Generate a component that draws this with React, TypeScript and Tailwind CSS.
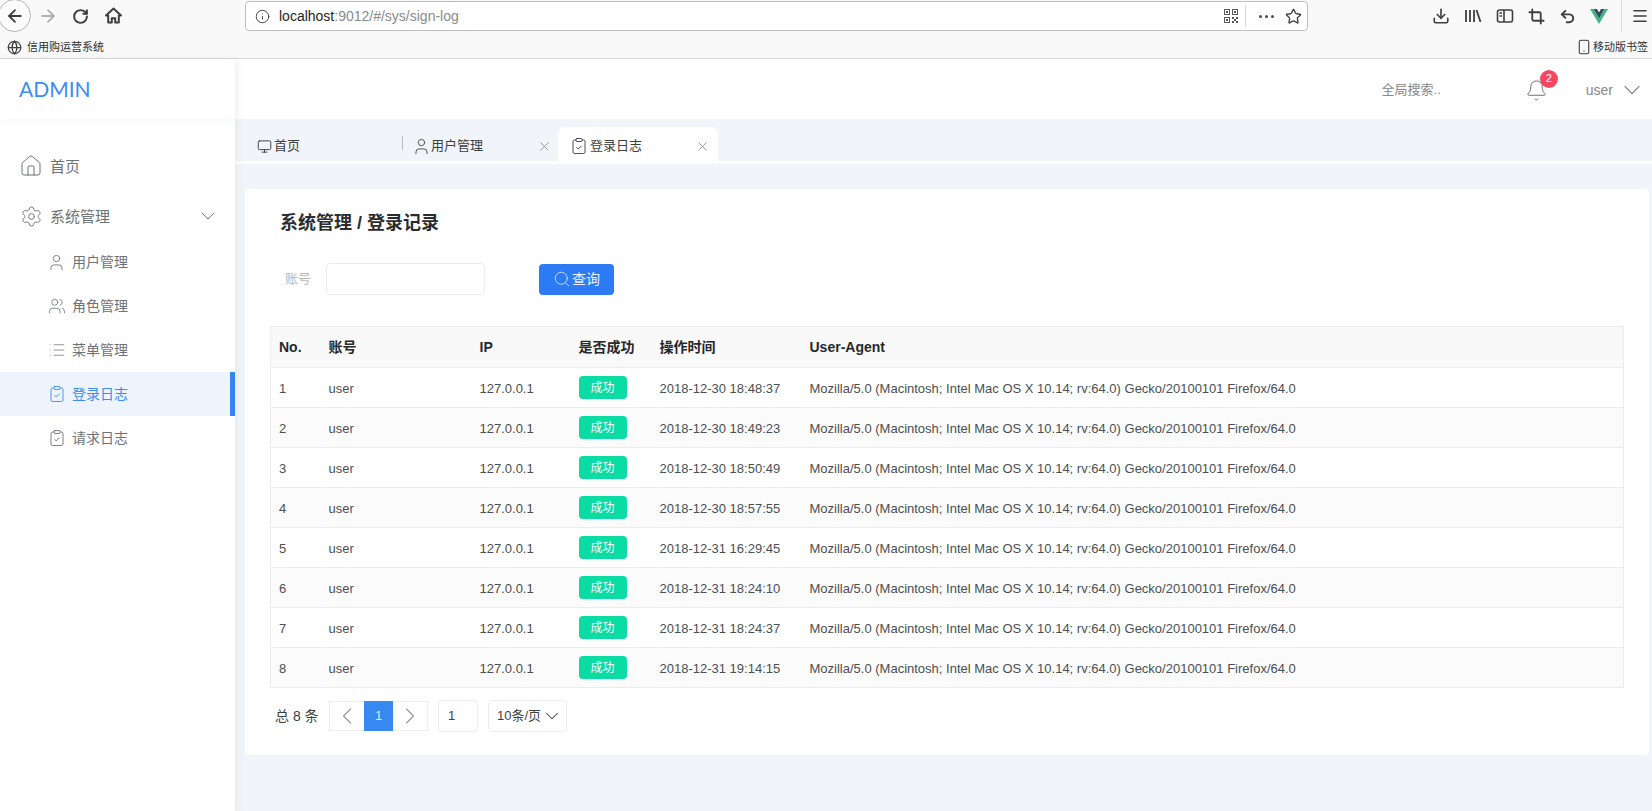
import React from "react";
import {
  House, Settings, ChevronDown, User, Users, List, ClipboardCheck, Monitor, Search, Bell, X,
  ChevronLeft, ChevronRight, ArrowLeft, ArrowRight, RotateCw, Info, Star, Download, Crop, Undo2, Menu, Globe, Smartphone,
} from "lucide-react";

const FONT = '"Liberation Sans","Noto Sans CJK SC",sans-serif';

const rows = [
  ["1", "2018-12-30 18:48:37"],
  ["2", "2018-12-30 18:49:23"],
  ["3", "2018-12-30 18:50:49"],
  ["4", "2018-12-30 18:57:55"],
  ["5", "2018-12-31 16:29:45"],
  ["6", "2018-12-31 18:24:10"],
  ["7", "2018-12-31 18:24:37"],
  ["8", "2018-12-31 19:14:15"],
];
const UA = "Mozilla/5.0 (Macintosh; Intel Mac OS X 10.14; rv:64.0) Gecko/20100101 Firefox/64.0";

function QrIcon() {
  return (
    <svg width="14" height="14" viewBox="0 0 14 14" fill="#5a5a5e">
      <path fillRule="evenodd" d="M0 0h6v6H0zM1 1v4h4V1zM8 0h6v6H8zM9 1v4h4V1zM0 8h6v6H0zM1 9v4h4V9z" />
      <rect x="2" y="2" width="2" height="2" />
      <rect x="10" y="2" width="2" height="2" />
      <rect x="2" y="10" width="2" height="2" />
      <rect x="8" y="8" width="2" height="2" />
      <rect x="12" y="8" width="2" height="2" />
      <rect x="10" y="10" width="2" height="2" />
      <rect x="8" y="12" width="2" height="2" />
      <rect x="12" y="12" width="2" height="2" />
    </svg>
  );
}

function BrowserChrome() {
  return (
    <div className="h-[59px] shrink-0 bg-[#f9f9f9] border-b border-[#d8d8d8] flex flex-col">
      <div className="h-[36px] flex items-start text-[#3f3f42]">
        <div className="w-[33px] h-[33px] -ml-[2px] -mt-[1px] rounded-full border border-[#b5b5b5] bg-[#fbfbfb] flex items-center justify-center shrink-0">
          <ArrowLeft size={20} strokeWidth={2.2} />
        </div>
        <ArrowRight size={20} strokeWidth={2.2} className="ml-[7px] mt-[6px] text-[#b1b1b3] shrink-0" />
        <RotateCw size={17} strokeWidth={2.8} className="ml-[14px] mt-[8px] shrink-0" />
        <svg width="17" height="17" viewBox="0 0 17 17" className="ml-[16px] mt-[7px] shrink-0">
          <path d="M8.5 1.5 1 8.5h2.2V15.5h3.6v-4.3h3.4v4.3h3.6V8.5H16z" fill="none" stroke="#3f3f42" strokeWidth="2" strokeLinejoin="round" />
        </svg>
        <div className="ml-[123px] mt-[1px] w-[1063px] h-[30px] rounded-[4px] bg-white border border-[#bdbdbd] flex items-center pl-[9px] pr-[5px] shrink-0">
          <Info size={15} strokeWidth={1.6} className="text-[#47474a] shrink-0" />
          <span className="ml-[9px] text-[14px] text-[#1f1f21]">localhost<span className="text-[#8a8a8c]">:9012/#/sys/sign-log</span></span>
          <div className="flex-1" />
          <QrIcon />
          <div className="w-px h-[22px] bg-[#d4d4d4] ml-[7px]" />
          <div className="flex gap-[2px] ml-[13px]">
            <span className="w-[3px] h-[3px] rounded-full bg-[#4c4c4f]" />
            <span className="mx-[1px] w-[3px] h-[3px] rounded-full bg-[#4c4c4f]" />
            <span className="w-[3px] h-[3px] rounded-full bg-[#4c4c4f]" />
          </div>
          <Star size={17} strokeWidth={2} className="ml-[11px] text-[#47474a]" />
        </div>
        <div className="flex-1" />
        <div className="flex items-center h-[32px] gap-[14px] pr-[3px]">
          <Download size={18} strokeWidth={2.2} />
          <svg width="18" height="18" viewBox="0 0 18 18" fill="none" stroke="#3f3f42" strokeWidth="1.8">
            <path d="M2 3v12M6 3v12M10 3v12M12.5 3l4 12" />
          </svg>
          <svg width="18" height="18" viewBox="0 0 18 18" fill="none" stroke="#3f3f42" strokeWidth="1.6">
            <rect x="1.5" y="3" width="15" height="12" rx="2" />
            <path d="M8 3v12M3.5 6h2.5M3.5 9h2.5" />
          </svg>
          <Crop size={17} strokeWidth={2.6} />
          <Undo2 size={17} strokeWidth={2.8} />
          <svg width="18" height="16" viewBox="0 0 18 16">
            <path d="M0 1h3.6L9 10.5 14.4 1H18L9 16z" fill="#41b883" />
            <path d="M3.6 1H7l2 3.5L11 1h3.4L9 10.5z" fill="#35495e" />
          </svg>
          <div className="w-px h-[32px] bg-[#dcdcdc] -ml-[1px]" />
          <Menu size={18} strokeWidth={2} className="-ml-[5px]" />
        </div>
      </div>
      <div className="flex-1 flex items-center justify-between pl-[7px] pr-[4px] text-[12px] text-[#2f2f31]">
        <div className="flex items-center gap-[5px]">
          <Globe size={15} strokeWidth={2} className="text-[#404043]" />
          <span className="text-[11px]">信用购运营系统</span>
        </div>
        <div className="flex items-center gap-[1px]">
          <Smartphone size={16} strokeWidth={2} className="text-[#606063]" />
          <span className="text-[11px]">移动版书签</span>
        </div>
      </div>
    </div>
  );
}

function SubItem({ icon, label, active }: { icon: React.ReactNode; label: string; active?: boolean }) {
  return (
    <div className={`h-[44px] flex items-center pl-[47px] text-[14px] ${active ? "bg-[#edf4fe] text-[#3b8bf2] border-r-[5px] border-[#3385f0]" : "text-[#6d7279]"}`}>
      <span className="w-[25px] shrink-0 flex">{icon}</span>
      <span>{label}</span>
    </div>
  );
}

function Sidebar() {
  return (
    <aside className="w-[235px] shrink-0 bg-white relative z-10 shadow-[3px_0_8px_rgba(30,50,90,0.05)]">
      <div className="h-[60px] flex items-center pl-[19px] shadow-[0_3px_8px_rgba(30,50,90,0.04)]">
        <span className="text-[21px] text-[#3b8df2]" style={{ fontFamily: "Lato, sans-serif" }}>ADMIN</span>
      </div>
      <div className="pt-[23px]">
        <div className="h-[50px] flex items-center pl-[19px] text-[15px] text-[#6d7279]">
          <House size={24} strokeWidth={1} className="shrink-0 -mt-[2px]" />
          <span className="ml-[7px]">首页</span>
        </div>
        <div className="h-[50px] -mb-[2px] flex items-center pl-[20px] pr-[15px] text-[15px] text-[#6d7279]">
          <Settings size={23} strokeWidth={1} className="shrink-0 -mt-[2px]" />
          <span className="ml-[7px] flex-1">系统管理</span>
          <ChevronDown size={24} strokeWidth={1} className="-mt-[2px]" />
        </div>
        <SubItem icon={<User size={19} strokeWidth={1.1} />} label="用户管理" />
        <SubItem icon={<Users size={18} strokeWidth={1.1} className="ml-[1px]" />} label="角色管理" />
        <SubItem icon={<List size={18} strokeWidth={1} className="ml-[1px]" />} label="菜单管理" />
        <SubItem active icon={<ClipboardCheck size={18} strokeWidth={1.2} className="ml-[1px]" />} label="登录日志" />
        <SubItem icon={<ClipboardCheck size={18} strokeWidth={1.2} className="ml-[1px]" />} label="请求日志" />
      </div>
    </aside>
  );
}

function TopBar() {
  return (
    <div className="h-[60px] shrink-0 bg-white flex items-center justify-end text-[13px] text-[#86888c] pt-[2px]">
      <span>全局搜索..</span>
      <div className="relative ml-[84px] flex">
        <Bell size={23} strokeWidth={1} className="text-[#666a70]" />
        <span className="absolute -top-[9px] left-[15px] w-[18px] h-[18px] rounded-full bg-[#f5475f] text-white text-[11px] flex items-center justify-center">2</span>
      </div>
      <span className="ml-[38px] text-[14px]">user</span>
      <ChevronDown size={28} strokeWidth={1} className="ml-[5px] mr-[6px]" />
    </div>
  );
}

function Tab({ icon, label, active, close, sep, w }: { icon: React.ReactNode; label: string; active?: boolean; close?: boolean; sep?: boolean; w: string }) {
  return (
    <div className={`${w} h-[34px] shrink-0 flex items-center text-[13px] text-[#3a3d42] relative pt-[4px] ${active ? "bg-white rounded-t-[8px] pl-[15px] pr-[8px]" : "pl-[12px] pr-[6px]"}`}>
      {sep && <span className="absolute left-0 top-[9px] w-px h-[14px] bg-[#b9bcc0]" />}
      <span className="flex w-[17px] shrink-0">{icon}</span>
      <span className="flex-1">{label}</span>
      {close && <X size={15} strokeWidth={1.2} className="text-[#808080]" />}
    </div>
  );
}

function TabBar() {
  return (
    <div className="shrink-0">
      <div className="h-[42px] flex items-end pl-[10px] bg-[#f1f5f9]">
        <Tab w="w-[157px]" icon={<Monitor size={15} strokeWidth={1.5} />} label="首页" />
        <Tab w="w-[156px]" sep close icon={<User size={19} strokeWidth={1.1} className="-ml-[2px]" />} label="用户管理" />
        <Tab w="w-[160px]" active close icon={<ClipboardCheck size={18} strokeWidth={1.2} className="-ml-[3px]" />} label="登录日志" />
      </div>
      <div className="h-[3px] bg-white" />
    </div>
  );
}

function Table() {
  const th = "px-[9px] text-left font-bold text-[14px] text-[#26282c]";
  const td = "px-[9px] pt-[2px] text-[13px] text-[#4b4e53] whitespace-nowrap";
  return (
    <table className="w-[1354px] ml-[25px] table-fixed border-collapse border border-[#ececec] mt-[31px]">
      <colgroup>
        <col className="w-[50px]" />
        <col className="w-[150px]" />
        <col className="w-[99px]" />
        <col className="w-[81px]" />
        <col className="w-[150px]" />
        <col />
      </colgroup>
      <thead>
        <tr className="h-[41px] bg-[#f9f9f9] border-b border-[#ececec]">
          <th className={`${th} pl-[8px]`}>No.</th>
          <th className={`${th} pl-[8px]`}>账号</th>
          <th className={th}>IP</th>
          <th className={th}>是否成功</th>
          <th className={th}>操作时间</th>
          <th className={th}>User-Agent</th>
        </tr>
      </thead>
      <tbody>
        {rows.map(([n, t], i) => (
          <tr key={n} className={`h-[40px] border-b border-[#ececec] ${i % 2 ? "bg-[#fbfbfc]" : "bg-white"}`}>
            <td className={`${td} pl-[8px]`}>{n}</td>
            <td className={`${td} pl-[8px]`}>user</td>
            <td className={td}>127.0.0.1</td>
            <td className="px-[9px]">
              <span className="w-[48px] h-[23px] rounded-[4px] bg-[#0adca3] text-white text-[12px] flex items-center justify-center">成功</span>
            </td>
            <td className={td}>{t}</td>
            <td className={td}>{UA}</td>
          </tr>
        ))}
      </tbody>
    </table>
  );
}

function Pager() {
  return (
    <div className="flex items-center ml-[30px] mt-[12px] h-[32px] text-[14px] text-[#3c3f44]">
      <span className="w-[54px]">总 8 条</span>
      <div className="w-[99px] h-[30px] flex border border-[#ececec]">
        <div className="w-[34px] flex items-center justify-center"><ChevronLeft size={28} strokeWidth={1} className="text-[#999]" /></div>
        <div className="w-[29px] -my-px bg-[#3788ef] text-[#dce9fb] text-[13px] flex items-center justify-center">1</div>
        <div className="flex-1 flex items-center justify-center"><ChevronRight size={28} strokeWidth={1} className="text-[#999]" /></div>
      </div>
      <div className="ml-[10px] w-[40px] h-[32px] rounded-[4px] border border-[#ececec] flex items-center pl-[9px] text-[13px]">1</div>
      <div className="ml-[10px] w-[79px] h-[32px] rounded-[4px] border border-[#ececec] flex items-center pl-[8px] text-[13px]">
        10条/页
        <ChevronDown size={22} strokeWidth={1.1} />
      </div>
    </div>
  );
}

function Card() {
  return (
    <div className="ml-[10px] mr-[3px] mt-[25px] h-[566px] rounded-[4px] bg-white overflow-hidden">
      <h1 className="ml-[35px] mt-[22px] h-[25px] leading-[25px] text-[18px] font-bold text-[#2a2c30]">系统管理 / 登录记录</h1>
      <div className="flex items-center mt-[27px] ml-[40px] h-[32px]">
        <span className="text-[13px] text-[#b5b7ba] w-[41px]">账号</span>
        <div className="w-[159px] h-[32px] rounded-[4px] border border-[#ececec]" />
        <button className="ml-[54px] w-[75px] h-[31px] rounded-[4px] bg-[#2d7bf4] text-[#eef4fe] text-[14px] flex items-center justify-center gap-[1px]">
          <Search size={18} strokeWidth={1} />
          查询
        </button>
      </div>
      <Table />
      <Pager />
    </div>
  );
}

export default function App() {
  return (
    <div className="w-[1652px] h-[811px] overflow-hidden flex flex-col bg-[#f1f5f9]" style={{ fontFamily: FONT }}>
      <BrowserChrome />
      <div className="flex-1 flex min-h-0">
        <Sidebar />
        <main className="flex-1 min-w-0 flex flex-col">
          <TopBar />
          <TabBar />
          <Card />
        </main>
      </div>
    </div>
  );
}
